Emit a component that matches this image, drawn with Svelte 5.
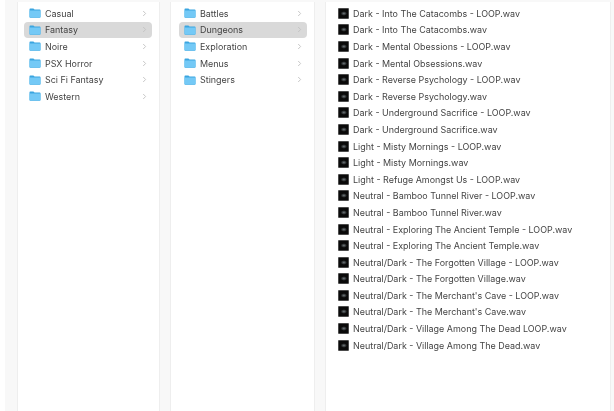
<script>
  const genres = ['Casual', 'Fantasy', 'Noire', 'PSX Horror', 'Sci Fi Fantasy', 'Western'];
  const folders = ['Battles', 'Dungeons', 'Exploration', 'Menus', 'Stingers'];
  const files = [
    'Dark - Into The Catacombs - LOOP.wav',
    'Dark - Into The Catacombs.wav',
    'Dark - Mental Obessions - LOOP.wav',
    'Dark - Mental Obsessions.wav',
    'Dark - Reverse Psychology - LOOP.wav',
    'Dark - Reverse Psychology.wav',
    'Dark - Underground Sacrifice - LOOP.wav',
    'Dark - Underground Sacrifice.wav',
    'Light - Misty Mornings - LOOP.wav',
    'Light - Misty Mornings.wav',
    'Light - Refuge Amongst Us - LOOP.wav',
    'Neutral - Bamboo Tunnel River - LOOP.wav',
    'Neutral - Bamboo Tunnel River.wav',
    'Neutral - Exploring The Ancient Temple - LOOP.wav',
    'Neutral - Exploring The Ancient Temple.wav',
    'Neutral/Dark - The Forgotten Village - LOOP.wav',
    'Neutral/Dark - The Forgotten Village.wav',
    "Neutral/Dark - The Merchant's Cave - LOOP.wav",
    "Neutral/Dark - The Merchant's Cave.wav",
    'Neutral/Dark - Village Among The Dead LOOP.wav',
    'Neutral/Dark - Village Among The Dead.wav'
  ];
</script>

{#snippet folderList(items, selected)}
  <ul class="list">
    {#each items as item}
      <li class="row" class:selected={item === selected}>
        <svg class="folder" viewBox="0 0 12 10" width="12" height="10">
          <path d="M0.5 1.2q0-.8.8-.8h2.8q.4 0 .7.3l.7.7h5.2q.8 0 .8.8v6.8q0 .8-.8.8H1.3q-.8 0-.8-.8z" fill="#3aa5e0" />
          <path d="M0.5 2.6h11v6.2q0 .8-.8.8H1.3q-.8 0-.8-.8z" fill="#74c9f6" />
        </svg>
        <span class="name">{item}</span>
        <svg class="chevron" viewBox="0 0 5 7" width="5" height="7">
          <path d="M1.2 1 3.6 3.5 1.2 6" fill="none" stroke="#c2c2c2" stroke-width="0.9" />
        </svg>
      </li>
    {/each}
  </ul>
{/snippet}

<div class="finder">
  <section class="column first">
    {@render folderList(genres, 'Fantasy')}
  </section>
  <section class="column second">
    {@render folderList(folders, 'Dungeons')}
  </section>
  <section class="column files">
    <ul class="list">
      {#each files as file, i}
        <li class="file">
          <svg class="thumb" viewBox="0 0 11 11" width="11" height="11">
            <defs>
              <radialGradient id="glow-{i}" cx="0.55" cy="0.5" r="0.45">
                <stop offset="0" stop-color="#6f777b" />
                <stop offset="1" stop-color="#0a0a0a" />
              </radialGradient>
            </defs>
            <rect x="0.25" y="0.25" width="10.5" height="10.5" rx="0.8" fill="#0a0a0a" stroke="#555" stroke-width="0.5" />
            <rect x="2" y="3" width="7" height="5" fill="url(#glow-{i})" />
          </svg>
          <span class="name">{file}</span>
        </li>
      {/each}
    </ul>
  </section>
</div>

<style>
  :global(body) {
    background: #fff;
  }
  .finder {
    display: flex;
    gap: 10px;
    height: 411px;
    width: 609px;
    margin-left: 5px;
    padding: 2px 3px 0 12px;
    box-sizing: border-box;
    background: #f8f8f8;
    font-family: Inter, "Liberation Sans", sans-serif;
    font-size: 8.95px;
    color: #444;
    filter: blur(0.35px);
  }
  .column {
    box-sizing: border-box;
    background: #fff;
    border-right: 1px solid #eee;
    border-left: 1px solid #eee;
    flex: none;
    height: 100%;
  }
  .first {
    width: 143px;
    padding: 0 7px 0 6px;
  }
  .second {
    width: 145px;
    padding: 0 7px 0 8px;
  }
  .files {
    flex: 1;
    padding-left: 12px;
  }
  .list {
    list-style: none;
    margin: 0;
    padding: 3px 0 0;
  }
  .row,
  .file {
    display: flex;
    align-items: center;
    height: 16.6px;
    white-space: nowrap;
  }
  .row {
    padding: 0 5px;
    border-radius: 4px;
  }
  .selected {
    background: #d9d9d9;
  }
  .folder {
    flex: none;
    margin-right: 4px;
  }
  .chevron {
    flex: none;
    margin-left: auto;
  }
  .thumb {
    flex: none;
    margin-right: 4px;
  }
</style>
